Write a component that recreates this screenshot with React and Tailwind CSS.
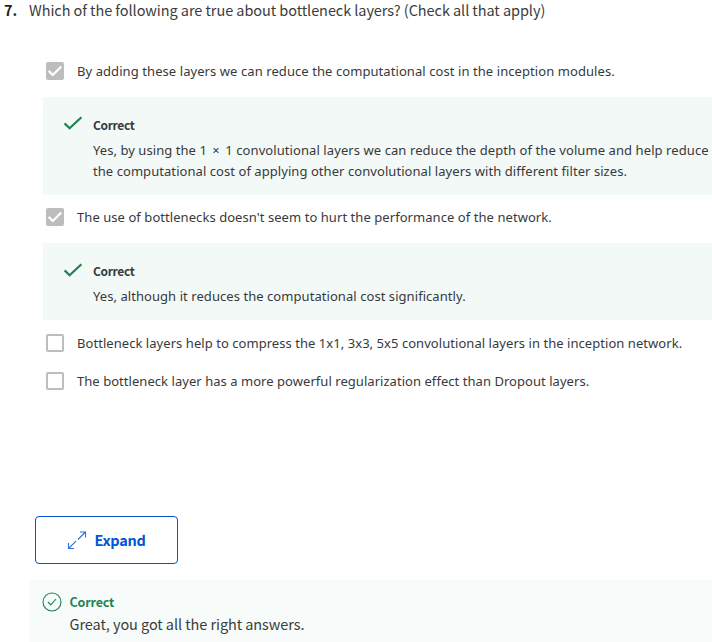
const SOURCE = "font-['Noto_Sans_CJK_SC','Noto_Sans',sans-serif]";

function Checkbox({ checked }) {
  if (!checked) {
    return <span className="h-[18px] w-[18px] shrink-0 rounded-[2px] border-2 border-[#bdbdbd] bg-white" />;
  }
  return (
    <span className="h-[18px] w-[18px] shrink-0 rounded-[2px] bg-[#bdbdbd]">
      <svg viewBox="0 0 18 18" className="h-[18px] w-[18px]" fill="none" stroke="#fff" strokeWidth="2.2">
        <path d="M2.7 8.900 L6.8 13 L15.300 4.500" />
      </svg>
    </span>
  );
}

function Option({ checked, children }) {
  return (
    <div className="flex h-[38px] items-center gap-[13px] pl-[46px]">
      <Checkbox checked={checked} />
      <span className="whitespace-nowrap">{children}</span>
    </div>
  );
}

function Feedback({ iconOffset = "mt-px", children }) {
  return (
    <div className="ml-[43px] flex bg-[#f3f9f7] pt-[17px] pb-[13px] pl-[20px]">
      <svg viewBox="0 0 20 18" className={`${iconOffset} h-[18px] w-[20px] shrink-0`} fill="none" stroke="#1f8354" strokeWidth="2.2">
        <path d="M1.6 8.4 L6.6 13.2 L18.4 2.2" />
      </svg>
      <div className="ml-[10px]">
        <div className={`h-[26px] text-[12px] leading-[22px] font-bold tracking-[-0.35px] text-[#373a3c] ${SOURCE}`}>Correct</div>
        {children}
      </div>
    </div>
  );
}

export default function App() {
  return (
    <div className="h-[642px] w-[712px] overflow-hidden bg-white font-['Noto_Sans',sans-serif] text-[13px] leading-[21px] tracking-[0.06px] text-[#373a3c]">
      <div className={`flex h-[52px] pl-[4px] text-[14.5px] leading-[19px] tracking-[-0.07px] whitespace-nowrap text-[#3c3c3c] ${SOURCE}`}>
        <span className="w-[25px] font-bold text-[#1f1f1f]">7.</span>
        <span>Which of the following are true about bottleneck layers? (Check all that apply)</span>
      </div>
      <Option checked><span className="tracking-[0.075px]">By adding these layers we can reduce the computational cost in the inception modules.</span></Option>
      <div className="h-[7px]" />
      <Feedback>
        <div className="whitespace-nowrap">Yes, by using the <span className="mr-[2px]">1</span> × <span className="ml-[2px]">1</span><span className="tracking-[0.08px]"> convolutional layers we can reduce the depth of the volume and help reduce</span></div>
        <div className="whitespace-nowrap">the computational cost of applying other convolutional layers with different filter sizes.</div>
      </Feedback>
      <div className="h-[3px]" />
      <Option checked>The use of bottlenecks doesn't seem to hurt the performance of the network.</Option>
      <div className="h-[7px]" />
      <Feedback iconOffset="mt-[2px]">
        <div className="whitespace-nowrap">Yes, although it reduces the computational cost significantly.</div>
      </Feedback>
      <div className="h-[4px]" />
      <Option><span className="tracking-[0.05px]">Bottleneck layers help to compress the 1x1, 3x3, 5x5 convolutional layers in the inception network.</span></Option>
      <Option><span className="tracking-[0.045px]">The bottleneck layer has a more powerful regularization effect than Dropout layers.</span></Option>
      <div className="h-[116px]" />
      <button className={`ml-[35px] flex h-[48px] w-[143px] items-center rounded-[4px] border border-[#0056d2] pl-[31px] text-[14.5px] font-bold tracking-[-0.28px] text-[#0056d2] ${SOURCE}`}>
        <svg viewBox="0 0 20 20" className="h-[20px] w-[20px]" fill="none" stroke="#2a72dc" strokeWidth="1.1">
          <path d="M13 2h5.500v5.500M18.500 2l-7.500 7.500M9 11.200l-7.500 7.300M1.500 13v5.500h5.500" />
        </svg>
        <span className="mb-[2px] ml-[7.500px]">Expand</span>
      </button>
      <div className={`mt-[16px] ml-[30px] flex h-[62px] bg-[#f7fbfa] pt-[12px] pl-[12px] ${SOURCE}`}>
        <svg viewBox="0 0 20 20" className="h-[20px] w-[20px] shrink-0" fill="none" stroke="#1f8354" strokeWidth="1.1">
          <circle cx="10" cy="10" r="9" />
          <path d="M6 10 L8.800 12.900 L14 7" />
        </svg>
        <div className="-mt-px ml-[7.500px] whitespace-nowrap">
          <div className="text-[12.5px] leading-[21px] font-bold tracking-[-0.15px] text-[#1f8354]">Correct</div>
          <div className="text-[14.5px] leading-[24px] tracking-[-0.08px] text-[#3c3c3c]">Great, you got all the right answers.</div>
        </div>
      </div>
    </div>
  );
}
